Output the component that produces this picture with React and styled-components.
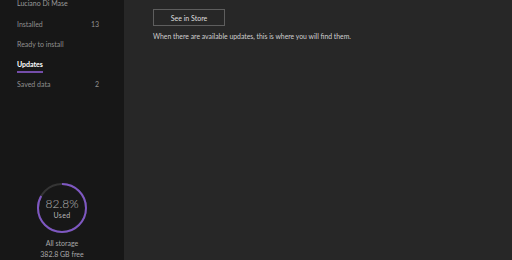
import React from 'react';
import styled, { createGlobalStyle } from 'styled-components';

const Global = createGlobalStyle`
body {
  margin: 0;
  background: #272727;
  font-family: Lato, "Noto Sans", sans-serif;
}
`;

const Container = styled.div`
display: flex;
height: 260px;
overflow: hidden;`;

const Sidebar = styled.div`
width: 124px;
flex-shrink: 0;
background: #171717;
display: flex;
flex-direction: column;
justify-content: space-between;`;

const Nav = styled.div`
display: flex;
flex-direction: column;
padding: 0 25px 0 17px;
margin-top: -7px;`;

const User = styled.div`
font-size: 7px;
color: #9a9a9a;
height: 20px;
line-height: 20px;
margin-bottom: 1px;`;

const NavItem = styled.div`
display: flex;
justify-content: space-between;
align-items: center;
height: 20px;
font-size: 7px;
color: ${p => (p.$active ? '#ffffff' : '#8f8f8f')};
font-weight: ${p => (p.$active ? 700 : 400)};`;

const Label = styled.span`
position: relative;
&::after {
  content: '';
  display: ${p => (p.$active ? 'block' : 'none')};
  position: absolute;
  left: 0;
  right: 0;
  bottom: -5px;
  height: 2px;
  background: #744da9;
}`;

const Storage = styled.div`
display: flex;
flex-direction: column;
align-items: center;
padding-bottom: 0;`;

const Ring = styled.div`
position: relative;
width: 52px;
height: 52px;
margin-bottom: 4px;`;

const RingText = styled.div`
position: absolute;
inset: 0;
display: flex;
flex-direction: column;
align-items: center;
justify-content: center;
color: #b8b8b8;`;

const Percent = styled.div`
font-size: 12px;
font-weight: 300;
line-height: 13px;`;

const Used = styled.div`
font-size: 7px;
line-height: 10px;
letter-spacing: 0.3px;`;

const Caption = styled.div`
font-size: 7px;
color: #a8a8a8;
line-height: 11px;`;

const Content = styled.div`
flex: 1;
padding: 9px 0 0 29px;`;

const Button = styled.div`
width: 70px;
height: 15px;
border: 1px solid #5e5e5e;
display: flex;
align-items: center;
justify-content: center;
font-size: 7px;
color: #dedede;`;

const Message = styled.div`
margin-top: 6px;
font-size: 6.85px;
color: #cfcfcf;`;

const items = [
  { label: 'Installed', count: '13' },
  { label: 'Ready to install' },
  { label: 'Updates', active: true },
  { label: 'Saved data', count: '2' },
];

export default function App() {
  const r = 24;
  const c = 2 * Math.PI * r;
  const used = 0.828;
  return (
    <Container>
      <Global />
      <Sidebar>
        <Nav>
          <User>Luciano Di Mase</User>
          {items.map(i => (
            <NavItem key={i.label} $active={i.active}>
              <Label $active={i.active}>{i.label}</Label>
              <span>{i.count}</span>
            </NavItem>
          ))}
        </Nav>
        <Storage>
          <Ring>
            <svg width="52" height="52" viewBox="0 0 52 52">
              <circle cx="26" cy="26" r={r} fill="none" stroke="#353535" strokeWidth="2" />
              <circle
                cx="26"
                cy="26"
                r={r}
                fill="none"
                stroke="#7e57c2"
                strokeWidth="2"
                strokeDasharray={`${c * used} ${c}`}
                transform="rotate(-90 26 26)"
              />
            </svg>
            <RingText>
              <Percent>82.8%</Percent>
              <Used>Used</Used>
            </RingText>
          </Ring>
          <Caption>All storage</Caption>
          <Caption>382.8 GB free</Caption>
        </Storage>
      </Sidebar>
      <Content>
        <Button>See in Store</Button>
        <Message>When there are available updates, this is where you will find them.</Message>
      </Content>
    </Container>
  );
}
